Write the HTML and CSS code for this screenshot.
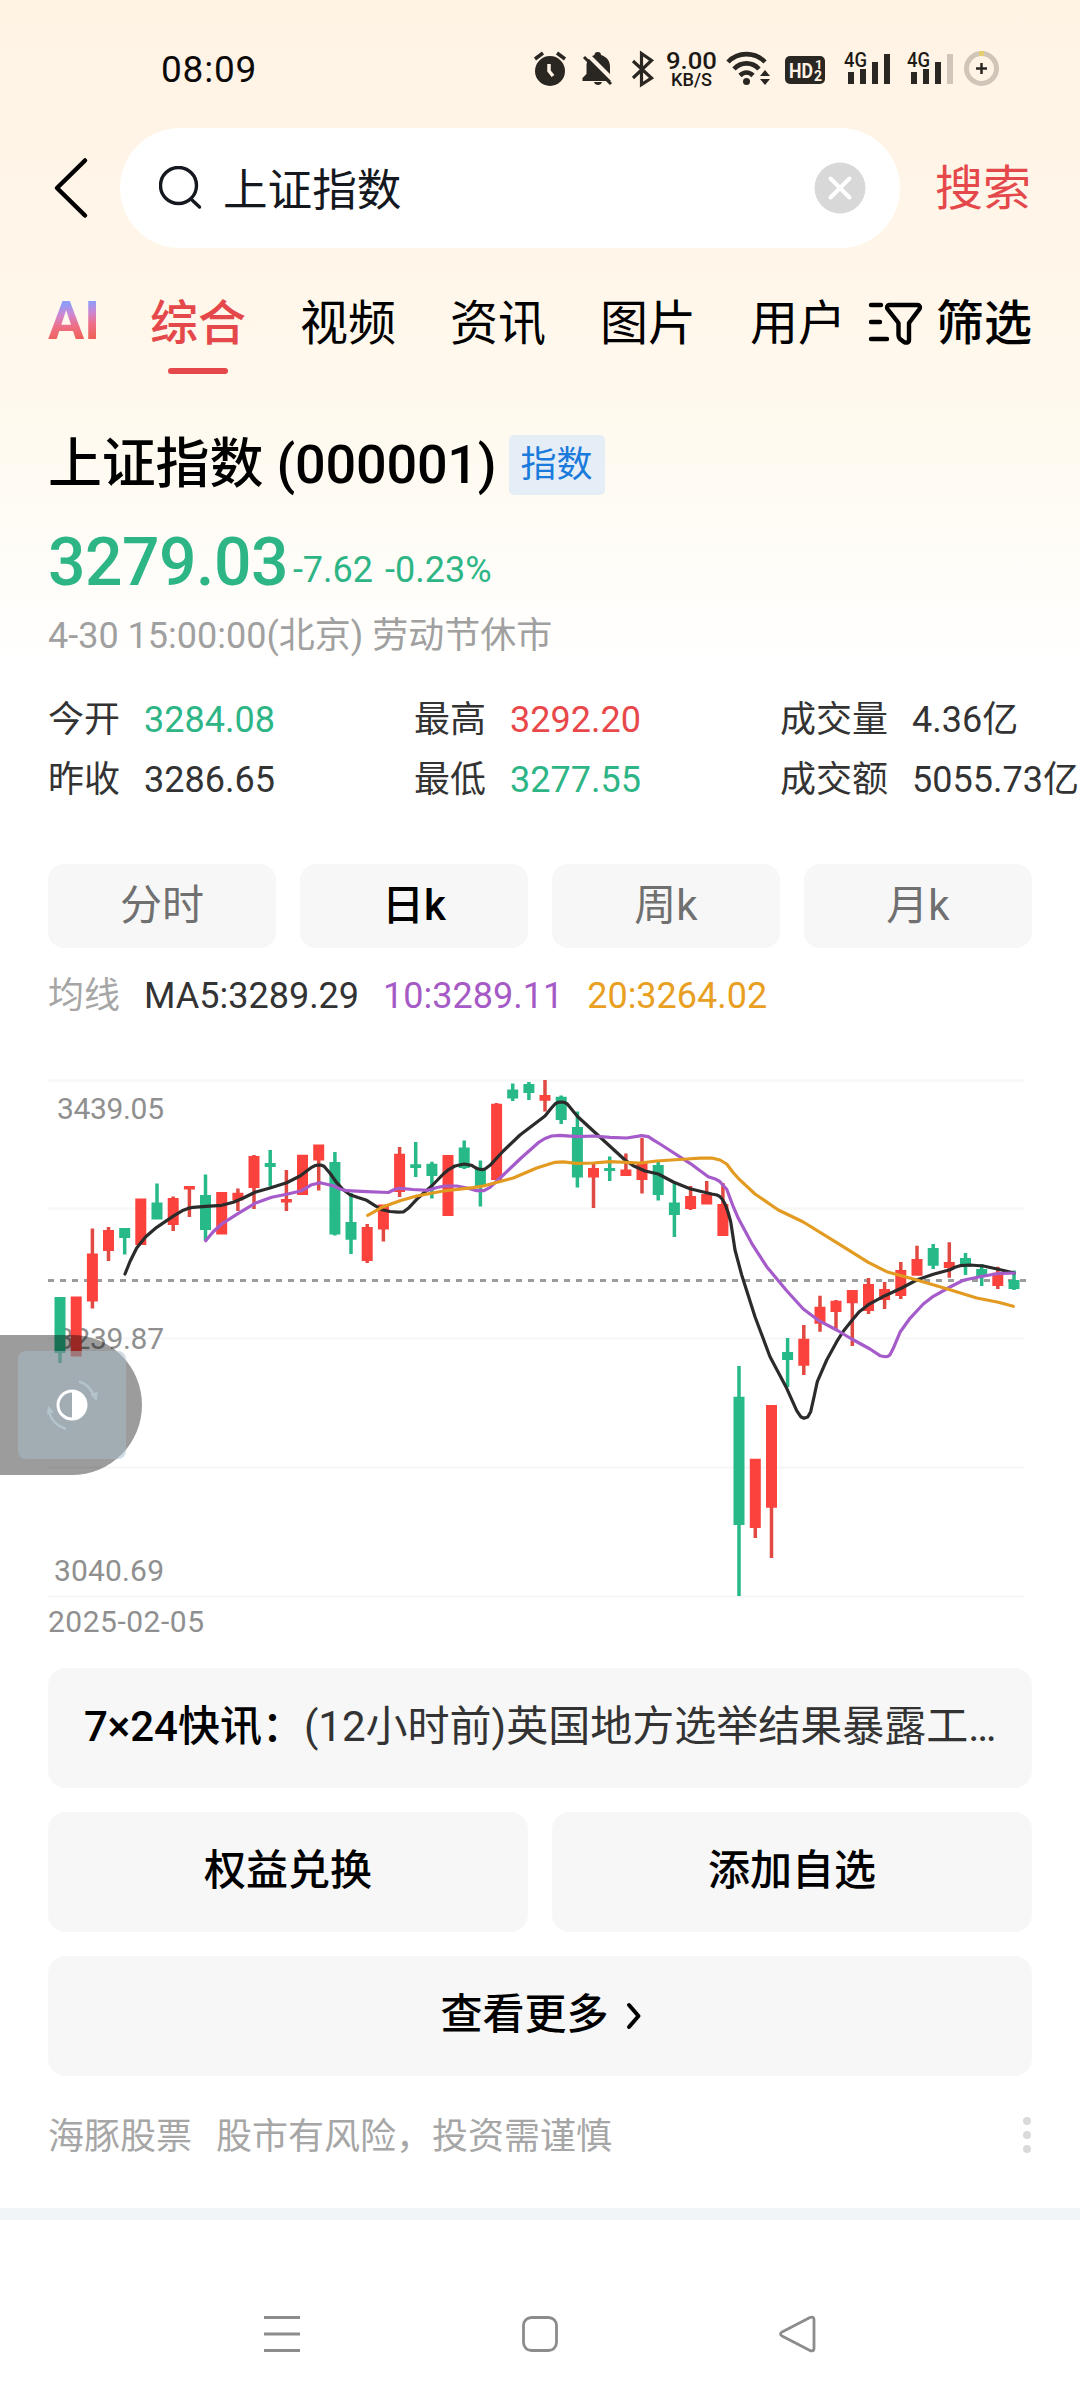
FILE: index.html
```html
<!DOCTYPE html>
<html lang="zh-CN">
<head>
<meta charset="utf-8">
<title>上证指数</title>
<link rel="stylesheet" href="styles.css">
</head>
<body>
<div class="page">
  <header class="statusbar">
    <span class="clock">08:09</span>
    <svg class="status-icons" viewBox="528 44 480 48" width="480" height="48">
      <g fill="#2a2622">
        <circle cx="550" cy="71" r="15"/>
        <path d="M535 59l8-6M565 59l-8-6" stroke="#2a2622" stroke-width="3.500"/>
        <path d="M549 64v7l4 5" stroke="#fef3e4" stroke-width="3.500" fill="none"/>
        <path d="M598 52c1.800 0 3 1 3 3 6 2 9 6 9 12v8l3.500 4v2h-31v-3l4-4v-8c0-6 3-9 8-11 0-2 1-3 3.500-3zM594 82h8c-1 4-7 4-8 0z"/>
        <path d="M587 54l28 28" stroke="#fef3e4" stroke-width="4"/>
        <path d="M584 57l27 27" stroke="#2a2622" stroke-width="3"/>
        <path d="M633 61l18.500 17-10 6.500V53.500l10 7L633 78" stroke="#2a2622" stroke-width="3.200" fill="none"/>
        <circle cx="746.500" cy="81.500" r="3.500"/>
        <g fill="none" stroke="#2a2622" stroke-width="4.600">
          <path d="M728 62c10-10.500 27-10.500 37 0M734 69c7-7.500 18-7.500 25 0M740 75.500c4-4 9-4 13 0"/>
        </g>
        <path d="M760 78l5-6 5 6zM760 81h10l-5 6z" transform="translate(0 -2)"/>
        <rect x="785" y="56" width="40" height="28" rx="5"/>
        <path d="M848 72h6v12h-6zM860 69h6v15h-6zM872 62h6v22h-6zM884 54h6v30h-6zM911 72h6v12h-6zM923 69h6v15h-6zM935 62h6v22h-6z"/>
        <path d="M947 54h6v30h-6z" fill="#cfc5b8"/>
      </g>
      <g class="status-text">
        <text x="666" y="69" font-size="24.500" textLength="51" lengthAdjust="spacingAndGlyphs">9.00</text>
        <text x="671" y="86" font-size="18" textLength="41" lengthAdjust="spacingAndGlyphs">KB/S</text>
        <text x="789" y="78" font-size="21" font-weight="700" class="inverse" textLength="24" lengthAdjust="spacingAndGlyphs">HD</text>
        <text x="815" y="69" font-size="13" font-weight="700" class="inverse">1</text>
        <text x="814" y="81" font-size="14" font-weight="700" class="inverse">2</text>
        <text x="844" y="67" font-size="21" textLength="23" lengthAdjust="spacingAndGlyphs">4G</text>
        <text x="907" y="67" font-size="21" textLength="23" lengthAdjust="spacingAndGlyphs">4G</text>
      </g>
      <circle cx="981.500" cy="68.500" r="15" fill="none" stroke="#cfc5b8" stroke-width="5"/>
      <path d="M979 53.500h5" stroke="#e3cf72" stroke-width="5"/>
      <path d="M976 68.500h11M981.500 63v11" stroke="#2a2622" stroke-width="2.500"/>
    </svg>
  </header>

  <div class="searchbar">
    <svg class="back" viewBox="0 0 40 64" width="40" height="64"><path d="M34 4.500L6 32l28 27.500" fill="none" stroke="#000" stroke-width="4.500" stroke-linecap="round" stroke-linejoin="round"/></svg>
    <div class="search-box">
      <svg viewBox="0 0 44 44" width="44" height="44"><g fill="none" stroke="#15191f" stroke-width="3.400" stroke-linecap="round"><circle cx="19.500" cy="19.500" r="18"/><path d="M33 34l7.500 7"/></g></svg>
      <span class="query">上证指数</span>
      <svg class="clear" viewBox="0 0 52 52" width="52" height="52"><circle cx="26" cy="26" r="25.500" fill="#d8d8d8"/><path d="M16.500 16.500l19 19M35.500 16.500l-19 19" stroke="#fff" stroke-width="4" stroke-linecap="round"/></svg>
    </div>
    <span class="search-action">搜索</span>
  </div>

  <nav class="tabs">
    <span class="tab ai">AI</span>
    <span class="tab active">综合</span>
    <span class="tab">视频</span>
    <span class="tab">资讯</span>
    <span class="tab">图片</span>
    <span class="tab">用户</span>
    <span class="filter">
      <svg viewBox="0 0 56 44" width="56" height="44"><g fill="none" stroke="#000" stroke-width="4.400" stroke-linecap="round" stroke-linejoin="round"><path d="M4 4h10M4 21h9M4 38h16"/><path d="M22 4h28.500c2 0 3 2 2 4L42 22v17c0 3-3 3-5 2l-4-3c-1-1-1.500-2-1.500-4V22L20.500 8c-1-2 0-4 1.500-4z"/></g></svg>
      筛选
    </span>
  </nav>

  <main class="stock">
    <div class="title-row">
      <h1 class="title">上证指数 (000001)</h1>
      <span class="badge">指数</span>
    </div>
    <div class="price-row down">
      <span class="price">3279.03</span>
      <span class="change">-7.62</span>
      <span class="change">-0.23%</span>
    </div>
    <div class="time">4-30 15:00:00(北京) 劳动节休市</div>
    <div class="stats">
      <div class="stat"><span>今开</span><span class="down">3284.08</span></div>
      <div class="stat"><span>最高</span><span class="up">3292.20</span></div>
      <div class="stat"><span>成交量</span><span>4.36亿</span></div>
      <div class="stat"><span>昨收</span><span>3286.65</span></div>
      <div class="stat"><span>最低</span><span class="down">3277.55</span></div>
      <div class="stat"><span>成交额</span><span>5055.73亿</span></div>
    </div>
    <div class="periods">
      <span class="period">分时</span>
      <span class="period selected">日k</span>
      <span class="period">周k</span>
      <span class="period">月k</span>
    </div>
    <div class="averages">
      <span class="avg-label">均线</span>
      <span>MA5:3289.29</span>
      <span class="ma10">10:3289.11</span>
      <span class="ma20">20:3264.02</span>
    </div>
  </main>

  <div class="chart">
    <svg viewBox="0 1040 1080 612" width="1080" height="612">
      <path class="grid" d="M48 1080.500H1024M48 1208.500H1024M48 1338.500H1024M48 1467.500H1024M48 1596.500H1024"/>
      <path class="last-price" d="M48 1280.500H1026"/>
      <g class="axis">
        <text x="57" y="1119" textLength="107">3439.05</text>
        <text x="57" y="1349" textLength="107">3239.87</text>
        <text x="54" y="1581" textLength="110">3040.69</text>
        <text x="48" y="1632" textLength="156">2025-02-05</text>
      </g>
      <path class="wick fall" d="M60 1297V1363M124.700 1228V1254.500M157 1183.500V1219M205.500 1174.500V1240.500M270.200 1150V1186.500M334.900 1152V1235.500M351 1193V1254M415.700 1142V1177M431.900 1161.700V1198.500M464.200 1140.500V1169M480.400 1160.500V1206.500M512.700 1083.500V1101M528.900 1082V1100M561.200 1095.500V1124M577.400 1111.500V1187.500M609.700 1156.500V1181M658.200 1162V1200.500M674.400 1181.500V1237M739 1366V1596M787.600 1338V1387M933.200 1244V1269M965.500 1253V1275M981.700 1264V1286M1014 1270.500V1290"/>
      <path class="wick rise" d="M92.400 1228.500V1308.500M108.500 1227V1261M173.200 1196.500V1231M189.400 1186V1217M237.900 1188.500V1211M254 1155V1209M286.400 1170V1211M318.700 1145V1190.500M367.200 1224V1263M383.400 1205V1241.500M399.600 1147V1197M496.600 1103V1110M545 1080V1111.500M593.500 1164V1208M625.900 1153.500V1176M642 1138V1193.500M690.600 1186V1210M706.700 1181V1204M722.900 1183V1236M755.300 1459V1538M771.500 1405V1558M803.800 1325V1375M820 1295.700V1331.700M836 1300V1330M852.300 1290V1346M868.500 1278V1314M884.600 1282V1309M900.800 1262V1299M917 1245.700V1275M949.300 1242.300V1277.700M997.800 1266.700V1289"/>
      <path class="candle fall" d="M60 1297V1353M124.700 1228V1238M157 1202.500V1219.500M205.500 1195V1230M270.200 1163V1167M334.900 1162V1234.500M351 1222V1239.700M415.700 1164.300V1168M431.900 1163.700V1176M464.200 1147.500V1168M480.400 1168.500V1186M512.700 1089.500V1098.500M528.900 1084V1093M561.200 1096.700V1120M577.400 1127V1177.500M609.700 1168V1171M658.200 1165V1195M674.400 1202.500V1215M739 1396.700V1525M787.600 1352V1360M933.200 1248V1265.700M965.500 1258V1266.700M981.700 1269V1276.700M1014 1280V1289"/>
      <path class="candle rise" d="M76.200 1296.500V1356.500M92.400 1253.500V1301.500M108.500 1230V1251M140.800 1198.500V1245M173.200 1198V1225M189.400 1186V1189.500M221.700 1192V1234.500M237.900 1192.700V1200.500M254 1156V1188M286.400 1199V1202.500M302.500 1154.700V1195M318.700 1144.500V1160.500M367.200 1227V1261M383.400 1204.500V1229.500M399.600 1153.700V1192M448 1155V1216M496.600 1103.700V1180M545 1095V1100.700M593.500 1168V1177.500M625.900 1169.500V1176M642 1163V1180M690.600 1196V1209M706.700 1194V1204.500M722.900 1204V1236M755.300 1458.700V1528M771.500 1405V1507.700M803.800 1338.700V1365.700M820 1306.700V1323.700M836 1300.700V1312M852.300 1290V1303.300M868.500 1284V1311M884.600 1289V1300M900.800 1270V1296M917 1259V1275.700M949.300 1262V1268M997.800 1272.700V1286"/>
      <polyline class="ma ma5-line" points="125,1274 130,1261.500 136.700,1248 145.700,1236.700 156.700,1227.300 173.300,1216.200 183.300,1210.200 188,1208.400 193.300,1207.300 205.700,1206.300 221.700,1205.300 233.300,1202.300 243.300,1198 255,1192.300 270,1188 286.700,1182.700 300,1176 311.700,1167.300 315,1165.600 318.300,1165 321.500,1165.200 324,1166.300 330,1173.300 336.700,1182.700 343,1189.500 350,1194.700 358,1197.500 366.700,1200.300 375,1205.700 382,1209.800 390,1211.500 398,1212.200 403.300,1212 408.300,1208.300 416.700,1199.300 431.700,1186 443.300,1174 449,1169.300 455,1166 464,1164 471.700,1165.300 475,1167.500 478.300,1169 482,1169.600 485,1169 490,1165.300 503.300,1151 520,1135 545,1116 551,1108.500 555,1104 558,1102.400 561.300,1102 564.500,1102.400 567.300,1104 577.300,1116.200 606.700,1143.300 625,1160 633.300,1165.700 645,1171 658.300,1174 673.300,1182 690,1188.700 711.700,1194 717,1195 720,1196.700 722.500,1199.500 725,1204 728,1212 730.700,1221.700 735,1250 741.700,1275 755,1316.700 770,1356.700 786.700,1388.300 796.700,1410.700 800.700,1416.700 804,1418.300 807.700,1417 810.700,1411.700 814,1397 817.300,1381.700 826.700,1360 836.700,1341.700 843.500,1331 851.700,1320.700 859,1312 868.300,1304.700 885,1295.700 901.700,1288 916.700,1280 933.300,1274.300 950,1269.700 955,1267.300 960,1265.700 970,1265 983.300,1266 998.300,1269.300 1014.300,1273"/>
      <polyline class="ma ma10-line" points="205.700,1240.700 213,1232 221.700,1224 238.300,1213.300 255,1203.300 271.700,1197.300 286.700,1194.300 301.700,1190.700 311.700,1184.700 320,1182.700 333.300,1185.700 340,1189 346.700,1190.700 366.700,1191.700 388.300,1192.500 395,1189.300 400,1188.300 413,1189.500 428.300,1190.300 437,1187.500 445,1186 456.700,1186 467,1188 476.700,1190.700 484,1190.700 490,1187.300 503.300,1175 520,1159 538.300,1142.700 545,1138.500 551.700,1136 560,1135.300 577.300,1136.700 593.300,1136 610,1137.300 626.700,1138 641.700,1135.700 648.300,1136.700 654,1140.300 660,1144 690,1163.300 708.300,1176.700 716,1179.300 720,1181.700 726.700,1189.300 733.300,1206.700 738.300,1218.300 751.700,1243.300 766.700,1266.700 786.700,1290.700 803.300,1309 818.300,1320.300 836.700,1330 851.700,1339 870,1349 880,1355.700 885,1356.700 888,1356.300 890,1354.700 893.300,1348.300 900,1332.300 910,1318.300 923.300,1304 933.300,1296.300 950,1287 963.300,1280.300 980,1276.700 996.700,1273.700 1014.300,1273"/>
      <polyline class="ma ma20-line" points="367.700,1215.300 383.300,1206.700 400,1200.700 416.700,1196 443.300,1191 473.300,1187.700 483.300,1186 513.300,1178 536.700,1168 555,1162.300 563,1161.900 576.700,1163.300 593.300,1163 610,1161.700 640,1163 656.700,1161 686.700,1159 700,1158.100 711.700,1158 720,1160 726.700,1164 733.300,1172.700 738.300,1178.300 755,1194 778.300,1210 803.300,1222 836.700,1242.700 868.300,1262.300 886.700,1271.700 913.300,1279 946.700,1288.700 976.700,1298 998.300,1302.300 1013.300,1306.300"/>
    </svg>
    <div class="floater">
      <div class="floater-tile">
        <svg viewBox="0 0 60 60" width="60" height="60">
          <g fill="none" stroke="#b4c4cb" stroke-width="2.500"><path d="M37 6.500c7 2 12 7 15 14M7 37c2 8 8 14 17 17"/></g>
          <path d="M48 19l8-2-1.500 9zM5 40l1-9 6 6z" fill="#b4c4cb"/>
          <circle cx="30" cy="30" r="14" fill="none" stroke="#fff" stroke-width="3"/>
          <path d="M30 16a14 14 0 0 1 0 28z" fill="#fff"/>
        </svg>
      </div>
    </div>
  </div>

  <section class="cards">
    <div class="card news"><b>7×24快讯：</b><span>(12小时前)英国地方选举结果暴露工…</span></div>
    <div class="card">权益兑换</div>
    <div class="card">添加自选</div>
    <div class="card wide">查看更多<svg viewBox="0 0 16 28" width="16" height="28"><path d="M3 3l9.500 11L3 25" fill="none" stroke="#000" stroke-width="4" stroke-linecap="round" stroke-linejoin="round"/></svg></div>
  </section>

  <footer class="source">
    <span>海豚股票</span><span>股市有风险，投资需谨慎</span>
    <span class="more"><i></i><i></i><i></i></span>
  </footer>

  <div class="sysnav">
    <svg viewBox="0 0 44 44" width="44" height="44"><path d="M4 5.500h36M4 22h36M4 38.500h36"/></svg>
    <svg viewBox="0 0 44 44" width="44" height="44"><rect x="5.500" y="5.500" width="33" height="33" rx="8"/></svg>
    <svg viewBox="0 0 44 44" width="44" height="44"><path d="M6 20L34 5.500c2-1 4 0 4 2v29c0 2-2 3-4 2L6 24c-2-1-2-3 0-4z"/></svg>
  </div>
</div>
</body>
</html>
```

FILE: styles.css
```css
* { box-sizing: border-box; }

body {
  margin: 0;
  background: #fff;
  color: #333;
  font-family: Roboto, "Noto Sans CJK SC", sans-serif;
}

.page {
  width: 1080px;
  height: 2400px;
  overflow: hidden;
  background: linear-gradient(#fff3e4 0, #fff5e8 200px, #fff9ed 400px, #fffcf6 530px, #fff 670px);
}

svg { display: block; flex: none; }

.up { color: #e8484a; }
.down { color: #2eb586; }

.statusbar {
  display: flex;
  justify-content: space-between;
  height: 128px;
  padding: 44px 72px 0 161px;
}

.clock {
  font-size: 37px;
  letter-spacing: .8px;
  line-height: 52px;
  color: #0c0a08;
}

.status-text { font-weight: 500; fill: #1c1916; }
.status-text .inverse { fill: #fef3e4; }

.searchbar {
  display: flex;
  align-items: center;
  height: 120px;
  padding-left: 51px;
}

.search-box {
  display: flex;
  align-items: center;
  width: 780px;
  height: 120px;
  margin-left: 29px;
  padding: 0 34px 0 39px;
  border-radius: 60px;
  background: #fff;
}

.query {
  flex: 1;
  margin-left: 20px;
  padding-top: 6px;
  font-size: 44.6px;
  line-height: 60px;
  color: #15191f;
}

.search-action {
  margin-left: 35px;
  padding-top: 2px;
  font-size: 48px;
  line-height: 60px;
  color: #e5484a;
}

.tabs {
  display: flex;
  gap: 54px;
  height: 152px;
  padding: 44px 48px 0;
  font-size: 48px;
  line-height: 64px;
  color: #000;
  white-space: nowrap;
}

.tab { width: 96px; height: 64px; }

.tab.ai {
  width: 48px;
  font-size: 54px;
  line-height: 58px;
  font-weight: 700;
  background: linear-gradient(175deg, #8f9cf8 20%, #cf86d0 36%, #ee7088 52%, #ee6158 72%);
  -webkit-background-clip: text;
  background-clip: text;
  color: transparent;
}

.tab.active {
  font-weight: 500;
  color: #e5484a;
}

.tab.active::after {
  content: "";
  display: block;
  width: 60px;
  height: 6px;
  margin: 12px auto 0 18px;
  border-radius: 3px;
  background: #e5484a;
}

.filter {
  display: flex;
  gap: 13px;
  margin-left: -33px;
  font-weight: 500;
}

.filter svg { margin-top: 9px; }

.stock { padding: 34px 48px 0; }

.title-row {
  display: flex;
  align-items: center;
  height: 62px;
}

.title {
  margin: 0;
  font-size: 54px;
  font-weight: 500;
  letter-spacing: -.2px;
  line-height: 62px;
  color: #000;
}

.badge {
  margin-left: 12px;
  padding: 0 12px;
  border-radius: 5px;
  background: #e5edf6;
  color: #1a7bdc;
  font-size: 36px;
  line-height: 60px;
}

.price-row {
  display: flex;
  align-items: baseline;
  height: 75px;
  margin-top: 29px;
  line-height: 75px;
}

.price {
  font-size: 66px;
  font-weight: 500;
  letter-spacing: -.5px;
}

.change {
  position: relative;
  top: -3px;
  font-size: 36px;
  margin-left: 12px;
}

.price + .change { margin-left: 5px; }

.time {
  margin-bottom: 18px;
  font-size: 36px;
  line-height: 72px;
  color: #a0a0a0;
}

.stats {
  display: grid;
  grid-template-columns: 366px 366px 300px;
  font-size: 36px;
  line-height: 60px;
  white-space: nowrap;
}

.stat { display: flex; gap: 24px; }

.periods {
  display: grid;
  grid-template-columns: repeat(4, 1fr);
  gap: 24px;
  margin-top: 54px;
}

.period {
  height: 84px;
  border-radius: 16px;
  background: #f7f7f7;
  color: #707070;
  font-size: 42px;
  line-height: 83px;
  text-align: center;
}

.period.selected { color: #000; font-weight: 500; }

.averages {
  display: flex;
  gap: 24px;
  height: 92px;
  font-size: 36px;
  line-height: 96px;
}

.avg-label { color: #a6a6a6; }
.ma10 { color: #a65ac6; }
.ma20 { color: #e89f22; }

.chart { position: relative; }

.grid { stroke: #f6f6f6; stroke-width: 2; }
.last-price { stroke: #9c9c9c; stroke-width: 3; stroke-dasharray: 6 6; }
.axis { font-size: 30px; fill: #8f8f8f; }
.wick { stroke-width: 3.5; }
.candle { stroke-width: 11; }
.rise { stroke: #fb423d; }
.fall { stroke: #27b987; }
.wick.rise { stroke: #e04a42; }

.ma { fill: none; stroke-width: 3.2; stroke-linejoin: round; stroke-linecap: round; }
.ma5-line { stroke: #2b2b2b; }
.ma10-line { stroke: #a55bc9; }
.ma20-line { stroke: #e39a20; }

.floater {
  position: absolute;
  left: 0;
  top: 295px;
  width: 142px;
  height: 140px;
  padding: 16px 0 0 18px;
  border-radius: 0 70px 70px 0;
  background: rgba(0, 0, 0, .39);
}

.floater-tile {
  width: 108px;
  height: 108px;
  padding: 24px;
  border-radius: 8px;
  background: rgba(166, 188, 202, .52);
}

.cards {
  display: grid;
  grid-template-columns: 1fr 1fr;
  gap: 24px;
  margin: 16px 48px 0;
}

.card {
  display: flex;
  justify-content: center;
  height: 120px;
  border-radius: 18px;
  background: #f7f7f7;
  color: #000;
  font-size: 42px;
  font-weight: 500;
  line-height: 118px;
  white-space: nowrap;
}

.card svg { margin: 46px 0 0 17px; }
.card.wide { grid-column: span 2; padding-left: 2px; }

.card.news {
  grid-column: span 2;
  justify-content: flex-start;
  padding-left: 36px;
}

.news b { font-weight: 500; }
.news span { font-weight: 400; color: #333; }

.source {
  display: flex;
  gap: 24px;
  height: 132px;
  padding: 0 48px;
  color: #a6a6a6;
  font-size: 36px;
  line-height: 122px;
}

.more {
  display: flex;
  flex-direction: column;
  gap: 6px;
  margin: 41px 1px 0 auto;
}

.more i {
  width: 8px;
  height: 8px;
  border-radius: 50%;
  background: #dadada;
}

.sysnav {
  display: flex;
  gap: 214px;
  height: 192px;
  padding: 92px 0 0 260px;
  border-top: 12px solid #f2f5f8;
  background: #fff;
}

.sysnav svg {
  fill: none;
  stroke: #8c8c8c;
  stroke-width: 2.8;
}
```
